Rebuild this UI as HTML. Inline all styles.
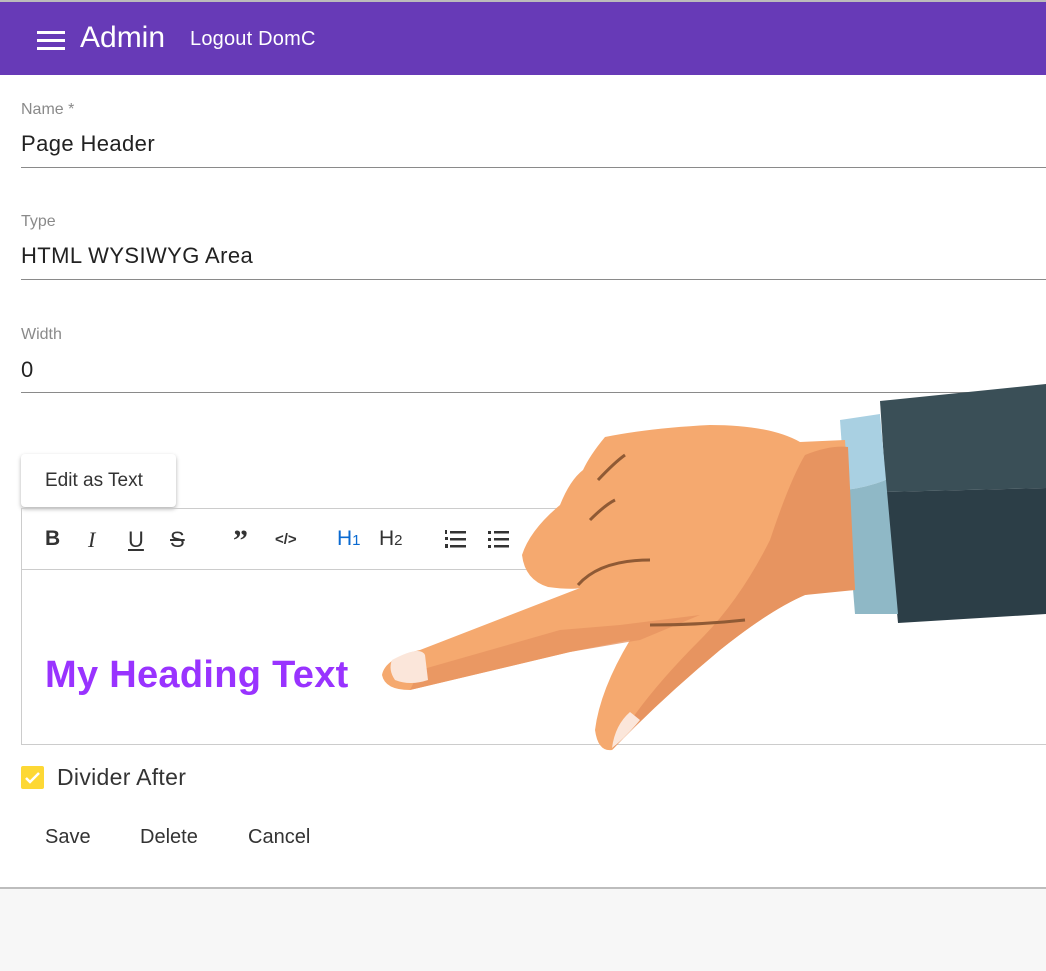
<!DOCTYPE html>
<html><head><meta charset="utf-8"><style>
*{margin:0;padding:0;box-sizing:border-box}
body{width:1046px;height:971px;overflow:hidden;background:#f7f7f7;font-family:"Liberation Sans",Arial,sans-serif;position:relative}
.bar{position:absolute;left:0;top:2px;width:1046px;height:73px;background:#673ab7;color:#fff}
.card{position:absolute;left:0;top:75px;width:1046px;height:814px;background:#fff;border-bottom:2px solid #bdbdbd}
.abs{position:absolute}
.lbl{position:absolute;left:21px;font-size:16px;color:#8a8a8a}
.val{position:absolute;left:21px;font-size:22px;color:#222;letter-spacing:.4px}
.line{position:absolute;left:21px;right:0;height:1px;background:#8a8a8a}
.tb{position:absolute;top:527px;font-size:22px;color:#333}
</style></head><body>
<div style="position:absolute;left:0;top:0;width:1046px;height:2px;background:#bbb"></div>
<div class="bar">
 <div class="abs" style="left:37px;top:29px;width:28px;height:3px;background:#fff"></div>
 <div class="abs" style="left:37px;top:37px;width:28px;height:3px;background:#fff"></div>
 <div class="abs" style="left:37px;top:45px;width:28px;height:3px;background:#fff"></div>
 <div class="abs" style="left:80px;top:19px;font-size:30px">Admin</div>
 <div class="abs" style="left:190px;top:26px;font-size:20px;letter-spacing:.2px">Logout DomC</div>
</div>
<div class="card"></div>
<div class="lbl" style="top:101px">Name *</div>
<div class="val" style="top:131px">Page Header</div>
<div class="line" style="top:167px"></div>
<div class="lbl" style="top:213px">Type</div>
<div class="val" style="top:243px">HTML WYSIWYG Area</div>
<div class="line" style="top:279px"></div>
<div class="lbl" style="top:326px">Width</div>
<div class="val" style="top:357px">0</div>
<div class="line" style="top:392px"></div>
<div class="abs" style="left:21px;top:454px;width:155px;height:53px;background:#fff;border-radius:4px;box-shadow:0 2px 4px rgba(0,0,0,.3);font-size:19px;color:#333;padding:16px 0 0 24px">Edit as Text</div>
<div class="abs" style="left:21px;top:508px;width:1030px;height:237px;border:1px solid #ccc"></div>
<div class="abs" style="left:21px;top:569px;width:1025px;height:1px;background:#ccc"></div>
<div class="tb" style="left:45px;font-weight:bold;font-size:21px">B</div>
<div class="tb" style="left:88px;font-style:italic;font-family:'Liberation Serif',serif">I</div>
<div class="tb" style="left:128px;text-decoration:underline">U</div>
<div class="tb" style="left:170px;text-decoration:line-through">S</div>
<div class="tb" style="left:233px;font-weight:bold;font-size:30px;top:524px;font-family:'Liberation Serif',serif">”</div>
<div class="tb" style="left:275px;font-size:15px;top:531px;font-weight:bold">&lt;/&gt;</div>
<div class="tb" style="left:337px;color:#0a6ad1;font-size:21px">H<span style="font-size:15px">1</span></div>
<div class="tb" style="left:379px;font-size:21px">H<span style="font-size:15px">2</span></div>
<svg class="abs" style="left:444px;top:529px" width="70" height="22"><g fill="#333"><rect x="6" y="2" width="16" height="2.5"/><rect x="6" y="9" width="16" height="2.5"/><rect x="6" y="16" width="16" height="2.5"/><rect x="1" y="1" width="2" height="4"/><rect x="1" y="8" width="3" height="3"/><rect x="1" y="15" width="3" height="4"/><rect x="44" y="2" width="3" height="3"/><rect x="44" y="9" width="3" height="3"/><rect x="44" y="16" width="3" height="3"/><rect x="50" y="2" width="15" height="2.5"/><rect x="50" y="9" width="15" height="2.5"/><rect x="50" y="16" width="15" height="2.5"/></g></svg>
<div class="abs" style="left:45px;top:654px;font-size:38px;font-weight:bold;color:#9933ff;letter-spacing:.3px">My Heading Text</div>
<div class="abs" style="left:21px;top:766px;width:23px;height:23px;background:#fdd835;border-radius:2px"><svg width="23" height="23"><path d="M5 12l4 4 9-9" stroke="#fff" stroke-width="2.5" fill="none"/></svg></div>
<div class="abs" style="left:57px;top:764px;font-size:23px;color:#333;letter-spacing:.3px">Divider After</div>
<div class="abs" style="left:45px;top:826px;font-size:20px;color:#333">Save</div>
<div class="abs" style="left:140px;top:826px;font-size:20px;color:#333">Delete</div>
<div class="abs" style="left:248px;top:826px;font-size:20px;color:#333">Cancel</div>
<svg class="abs" style="left:0;top:0" width="1046" height="971">
 <path d="M880 401 L1046 384 L1046 488 L886 492 Z" fill="#3a4f57"/>
 <path d="M886 492 L1046 488 L1046 614 L898 623 Z" fill="#2c3e47"/>
 <path d="M840 420 L880 414 L886 480 Q865 488 845 490 Z" fill="#a9d0e2"/>
 <path d="M845 490 Q865 488 886 480 L898 614 L855 614 Z" fill="#8fb8c6"/>
 <path d="M845 440 L800 442 Q770 425 710 425 Q650 428 605 437 Q590 455 583 470 Q570 480 560 505 Q530 530 522 555 Q525 580 548 587 Q570 590 580 588 L420 650 Q385 658 382 675 Q385 690 410 690 L570 652 L630 640 Q600 690 595 730 Q598 752 612 750 Q660 700 720 650 Q770 610 805 595 Q830 590 855 590 Z" fill="#f5a96f"/>
 <path d="M805 595 Q770 610 720 650 Q660 700 612 750 Q640 700 700 640 Q740 600 770 540 Q790 480 805 455 Q830 445 848 447 L855 590 Z" fill="#e79460"/>
 <path d="M420 670 L560 630 L620 625 L700 615 L640 640 L570 652 L410 690 Z" fill="#e79460" opacity=".8"/>
 <path d="M598 480 Q615 462 625 455 M590 520 Q605 505 615 500 M578 585 Q600 560 650 560 M650 625 Q700 625 745 620" stroke="#8f5a35" stroke-width="3" fill="none"/>
 <path d="M392 660 Q420 645 425 655 L428 680 Q410 686 395 680 Q388 670 392 660Z" fill="#fbe6da"/>
 <path d="M612 748 Q615 725 630 712 L640 720 Q625 738 612 748Z" fill="#fbe6da"/>
</svg>
</body></html>
